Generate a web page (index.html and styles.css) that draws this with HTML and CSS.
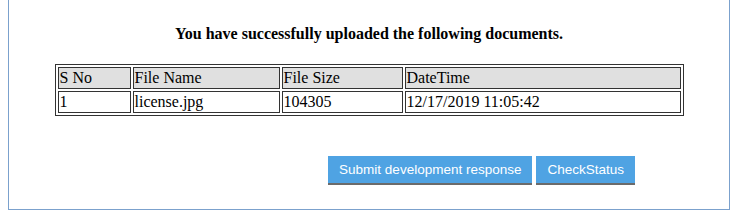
FILE: index.html
```html
<!DOCTYPE html>
<html lang="en">
<head>
    <meta charset="UTF-8">
    <meta name="viewport" content="width=device-width, initial-scale=1.0">
    <title>Upload Summary</title>
    <link rel="stylesheet" href="styles.css">
</head>
<body>
    <div class="panel">
        <div class="heading">You have successfully uploaded the following documents.</div>

        <table class="docs">
            <tr class="head">
                <td class="c-sno">S No</td>
                <td class="c-name">File Name</td>
                <td class="c-size">File Size</td>
                <td>DateTime</td>
            </tr>
            <tr>
                <td>1</td>
                <td>license.jpg</td>
                <td>104305</td>
                <td>12/17/2019 11:05:42</td>
            </tr>
        </table>

        <div class="actions">
            <button class="btn">Submit development response</button>
            <button class="btn">CheckStatus</button>
        </div>
    </div>
</body>
</html>
```

FILE: styles.css
```css
body {
    margin: 0;
    padding: 0;
    background: #fff;
    font-family: "Liberation Serif", "Times New Roman", serif;
    font-size: 16px;
}
.panel {
    margin: -2px 3px 0 8px;
    border: 1px solid #7ba1cd;
    padding: 26px 0 24px;
}
.heading {
    text-align: center;
    font-weight: bold;
    line-height: 18px;
    color: #000;
}
.docs {
    margin: 21px auto 0;
    width: 629px;
    border: 1px solid #333;
    border-spacing: 2px;
}
.docs td {
    border: 1px solid #333;
    padding: 1px;
    line-height: 18px;
    color: #000;
}
.docs .head td {
    background: #e0e0e0;
}
.c-sno { width: 69px; }
.c-name { width: 143px; }
.c-size { width: 117px; }
.actions {
    display: flex;
    justify-content: flex-end;
    gap: 4px;
    margin-top: 40px;
    padding-right: 94px;
}
.btn {
    font-family: "Liberation Sans", Arial, sans-serif;
    font-size: 13.5px;
    color: #fff;
    background: #4fa3e3;
    border: none;
    border-bottom: 2px solid #6b6b6b;
    height: 29px;
    padding: 0 11px;
    cursor: pointer;
}
```
